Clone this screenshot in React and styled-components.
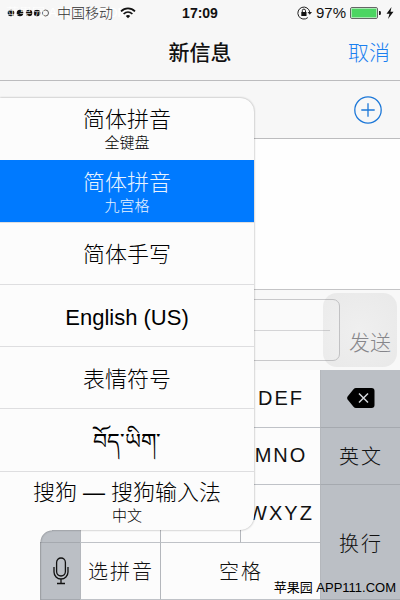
import styled, { createGlobalStyle } from 'styled-components';
import { useState } from 'react';

const inputMethods = [
  { id: 'full', name: '简体拼音', detail: '全键盘' },
  { id: 'nine', name: '简体拼音', detail: '九宫格' },
  { id: 'hand', name: '简体手写' },
  { id: 'en', name: 'English (US)' },
  { id: 'emoji', name: '表情符号' },
  { id: 'bo', name: 'བོད་ཡིག་' },
  { id: 'sogou', name: '搜狗 — 搜狗输入法', detail: '中文' },
];

function StatusBar() {
  return (
    <StStatus>
      <StCarrier>
        <StSignal viewBox="0 0 44 10" width="44" height="10">
          <circle cx="5" cy="5" r="3.3" />
          <circle cx="14" cy="5" r="3.3" />
          <circle cx="23" cy="5" r="3.3" />
          <circle cx="31" cy="5" r="3.3" />
          <circle cx="39.500" cy="5" r="3" fill="none" stroke="#333" strokeWidth="0.8" />
        </StSignal>
        <StOperator>中国移动</StOperator>
        <StWifi viewBox="0 0 16 12" width="16" height="12">
          <path d="M1 4.300C5 .3 11 .3 15 4.300" />
          <path d="M3.600 7C6.200 4.500 9.800 4.500 12.400 7" />
          <path d="M5.800 8.900C7 7.700 9 7.700 10.200 8.900L8 11.300Z" fill="#111" stroke="none" />
        </StWifi>
        <StTopMark>苹果园 APP111.COM</StTopMark>
      </StCarrier>
      <StClock>17:09</StClock>
      <StPower>
        <svg viewBox="0 0 15 14" width="15" height="14" fill="none" stroke="#222">
          <path d="M12.800 6.200A6 6 0 1 0 10.800 11.600" />
          <path d="M10.500 6h4.500l-2.200 2.700z" fill="#222" stroke="none" />
          <rect x="4.300" y="6" width="5.200" height="4" fill="#111" stroke="none" />
          <path d="M5.300 6V4.700a1.600 1.600 0 0 1 3.200 0V6" />
        </svg>
        <span>97%</span>
        <svg viewBox="0 0 32 12" width="32" height="12">
          <rect x="0.500" y="0.500" width="27" height="11" rx="1.500" fill="#fff" stroke="#666" />
          <rect x="1.500" y="1.500" width="25" height="9" fill="#4cd562" />
          <path d="M29 4h1q1 0 1 2t-1 2h-1z" fill="#222" />
        </svg>
        <svg viewBox="0 0 8 12" width="8" height="12">
          <path d="M5.500 0L.5 6.800h3L2 12l5.500-7.200h-3z" fill="#111" />
        </svg>
      </StPower>
    </StStatus>
  );
}

function App() {
  const [selected, setSelected] = useState('nine');
  const [subject, setSubject] = useState('');
  const [message, setMessage] = useState('');

  return (
    <>
      <GlobalStyle />
      <StScreen>
        <StatusBar />
        <StNav>
          <StTitle>新信息</StTitle>
          <StCancel>取消</StCancel>
        </StNav>
        <StRecipient>
          <StAdd aria-label="添加联系人">
            <svg viewBox="0 0 28 28" width="28" height="28" fill="none" stroke="#1d78d8" strokeWidth="1.300">
              <circle cx="14" cy="14" r="13.200" />
              <path d="M14 7.300v13.400M7.300 14h13.400" />
            </svg>
          </StAdd>
        </StRecipient>
        <StThread />
        <StCompose>
          <StFields>
            <StField aria-label="主题" value={subject} onChange={(e) => setSubject(e.target.value)} />
            <StRule />
            <StField aria-label="信息" value={message} onChange={(e) => setMessage(e.target.value)} />
          </StFields>
          <StSend>发送</StSend>
          <StAssistive />
        </StCompose>
        <StKeyboard>
          <StKey $dark />
          <StKey />
          <StKey />
          <StKey>DEF</StKey>
          <StKey $dark aria-label="删除">
            <svg viewBox="0 0 28 20" width="28" height="20">
              <path d="M9 0H24.500Q27.500 0 27.500 3V17Q27.500 20 24.500 20H9Q7.500 20 6.500 18.800L.6 11.500Q-.4 10 .6 8.500L6.500 1.200Q7.500 0 9 0Z" />
              <path d="M12 5.500l9 9M21 5.500l-9 9" stroke="#d5d8dc" strokeWidth="1.500" />
            </svg>
          </StKey>
          <StKey $dark />
          <StKey />
          <StKey />
          <StKey>MNO</StKey>
          <StKey $dark>英文</StKey>
          <StKey $dark />
          <StKey />
          <StKey />
          <StKey>WXYZ</StKey>
          <StKey $dark $rows={2}>换行</StKey>
          <StSplit>
            <StKey aria-label="切换键盘" />
            <StKey $dark aria-label="听写">
              <svg viewBox="0 0 16 28" width="16" height="28" fill="none" stroke="#111" strokeWidth="1.300">
                <rect x="3.600" y="1" width="8.800" height="18" rx="4.400" />
                <path d="M1 10v5a7 7 0 0 0 14 0v-5M8 22v4.500M4 26.500h8" />
              </svg>
            </StKey>
          </StSplit>
          <StKey>选拼音</StKey>
          <StKey $cols={2}>空格</StKey>
          <StMenu>
            {inputMethods.map((m) => (
              <StMethod key={m.id} $on={m.id === selected} onClick={() => setSelected(m.id)}>
                <StName>{m.name}</StName>
                {m.detail && <StDetail>{m.detail}</StDetail>}
              </StMethod>
            ))}
          </StMenu>
          <StMark>苹果园 APP111.COM</StMark>
        </StKeyboard>
      </StScreen>
    </>
  );
}

export default App

const GlobalStyle = createGlobalStyle`
  * {
    box-sizing: border-box;
  }

  body {
    margin: 0;
    background: #fdfdfd;
    color: #111;
    font-family: "Liberation Sans", "Noto Sans CJK SC", sans-serif;
    font-weight: 300;
  }

  button, input {
    margin: 0;
    padding: 0;
    border: 0;
    background: none;
    color: inherit;
    font: inherit;
  }

  svg {
    display: block;
    flex: none;
  }
`

const StScreen = styled.main`
  display: flex;
  flex-direction: column;
  min-height: 100vh;
  overflow: hidden;
`

const StStatus = styled.header`
  display: grid;
  grid-template-columns: 1fr auto 1fr;
  align-items: center;
  height: 26px;
  padding: 0 6px;
  background: #f7f7f7;
  font-size: 15px;
  line-height: 20px;
`

const StCarrier = styled.div`
  position: relative;
  display: flex;
  align-items: center;
  gap: 7px;
`

const StSignal = styled.svg`
  fill: #111;
`

const StOperator = styled.span`
  position: relative;
  z-index: 1;
  color: #333;
  font-size: 14px;
`

const StWifi = styled.svg`
  position: relative;
  z-index: 1;
  fill: none;
  stroke: #111;
  stroke-width: 1.7px;
`

const StTopMark = styled.span`
  position: absolute;
  left: 0;
  top: 0;
  color: #fff;
  font-size: 13px;
  white-space: nowrap;
`

const StClock = styled.time`
  font-size: 14px;
  font-weight: bold;
`

const StPower = styled.div`
  display: flex;
  align-items: center;
  justify-content: flex-end;
  gap: 4px;
`

const StNav = styled.nav`
  display: grid;
  grid-template-columns: 1fr auto 1fr;
  align-items: center;
  height: 55px;
  padding: 0 10px 4px;
  border-bottom: 1px solid #bcbcbe;
  background: #f7f7f7;
  font-size: 21px;
`

const StTitle = styled.h1`
  grid-column: 2;
  margin: 0;
  font-size: 21px;
  font-weight: 500;
`

const StCancel = styled.button`
  justify-self: end;
  color: #1a80f0;
`

const StRecipient = styled.div`
  display: flex;
  align-items: center;
  justify-content: flex-end;
  height: 58px;
  padding: 0 18px;
  border-bottom: 1px solid #bcbcbe;
  background: #f7f7f7;
`

const StAdd = styled.button`
  display: block;
`

const StThread = styled.section`
  flex: 1;
  background: #fefefe;
`

const StCompose = styled.form`
  position: relative;
  display: flex;
  align-items: flex-end;
  height: 81px;
  padding: 9px 9px 9px 40px;
  gap: 9px;
  border-top: 1px solid #c4c4c6;
  background: #f8f8f8;
`

const StFields = styled.div`
  display: flex;
  flex: 1;
  flex-direction: column;
  height: 62px;
  border: 1px solid #c8c8ca;
  border-radius: 7px;
  background: #fafafa;
`

const StField = styled.input`
  flex: 1;
  width: 100%;
  min-height: 0;
  padding: 0 8px;
`

const StRule = styled.div`
  height: 1px;
  margin-right: 9px;
  background: #d4d4d6;
`

const StSend = styled.button`
  color: #85858a;
  font-size: 21px;
  line-height: 36px;
`

const StAssistive = styled.div`
  position: absolute;
  right: 3px;
  top: 3px;
  width: 74px;
  height: 74px;
  border-radius: 14px;
  background: radial-gradient(rgba(150, 150, 150, 0.09), rgba(130, 130, 130, 0.13));
  pointer-events: none;
`

const StKeyboard = styled.section`
  position: relative;
  display: grid;
  grid-template-columns: repeat(5, 1fr);
  grid-template-rows: repeat(4, 1fr);
  height: 230px;
`

const StKey = styled.button`
  display: flex;
  align-items: center;
  justify-content: center;
  grid-column: span ${({ $cols }) => $cols || 1};
  grid-row: span ${({ $rows }) => $rows || 1};
  padding-left: 1px;
  border-left: 1px solid #b4b7bc;
  border-bottom: 1px solid ${({ $dark }) => ($dark ? '#a5a9af' : '#bfc2c7')};
  background: ${({ $dark }) => ($dark ? '#bbbfc5' : '#fcfcfc')};
  font-size: 20px;
  letter-spacing: 2px;
`

const StSplit = styled.div`
  display: grid;
  grid-template-columns: 1fr 1fr;
`

const StMenu = styled.div`
  position: absolute;
  left: 0;
  bottom: 70px;
  display: grid;
  grid-template-rows: repeat(6, 62fr) 58fr;
  width: 254px;
  height: 432px;
  border-radius: 0 14px 14px 0;
  background: #fcfcfc;
  filter: drop-shadow(0 0 1px rgba(0, 0, 0, 0.35));

  /* stem that joins the menu to the globe key */
  &::before {
    content: '';
    position: absolute;
    left: 0;
    top: 100%;
    width: 40px;
    height: 70px;
    background: #fcfcfc;
  }

  &::after {
    content: '';
    position: absolute;
    left: 40px;
    top: 100%;
    width: 12px;
    height: 12px;
    background: radial-gradient(circle at 100% 100%, transparent 11px, #fcfcfc 12px);
  }
`

const StMethod = styled.button`
  display: flex;
  flex-direction: column;
  align-items: center;
  justify-content: center;
  padding-top: 4px;
  border-bottom: 1px solid #dedee0;
  background: ${({ $on }) => ($on ? '#007aff' : 'transparent')};
  color: ${({ $on }) => ($on ? '#e8f3ff' : '#000')};

  &:first-child {
    padding-top: 2px;
    border-radius: 0 14px 0 0;
    border-bottom: 0;
  }

  &:last-child {
    border-bottom: 0;
  }
`

const StName = styled.span`
  font-size: 22px;
  line-height: 26px;
`

const StDetail = styled.span`
  font-size: 15px;
  line-height: 20px;
`

const StMark = styled.span`
  position: absolute;
  right: 4px;
  bottom: 3px;
  color: #000;
  font-size: 13px;
  font-weight: 400;
  line-height: 18px;
`
